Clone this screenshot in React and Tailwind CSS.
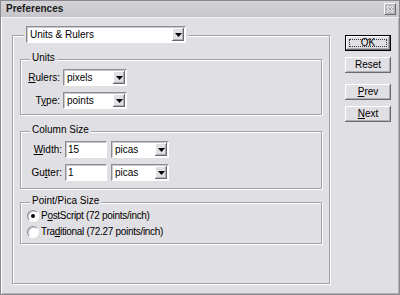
import React from 'react';

const etched = "border border-[#a4a3a8] shadow-[inset_1px_1px_0_#ffffff,1px_1px_0_#ffffff]";
const sunken = "bg-white border border-t-[#8e8d92] border-l-[#8e8d92] border-b-white border-r-white shadow-[inset_1px_1px_0_#c8c7cc]";
const raised = "bg-[#e0dfe3] shadow-[inset_-1px_-1px_0_#6a696e,inset_1px_1px_0_#ffffff,inset_-2px_-2px_0_#b0afb4]";

function Arrow() {
  return (
    <div className={`w-[12px] h-[13px] flex items-center justify-center ${raised}`}>
      <svg width="7" height="4" viewBox="0 0 7 4">
        <path d="M0 0h7L3.5 4z" fill="#000" />
      </svg>
    </div>
  );
}

function Select({ value, width }) {
  return (
    <div className={`${sunken} h-[17px] flex items-center justify-between pl-[3px] pr-[1px]`} style={{ width }}>
      <span className="leading-none">{value}</span>
      <Arrow />
    </div>
  );
}

function Group({ title, className, children }) {
  return (
    <div className={`relative ${etched} ${className}`}>
      <span className="absolute left-[9px] -top-[7px] px-[2px] bg-[#e0dfe3] leading-none">{title}</span>
      {children}
    </div>
  );
}

function Button({ children, def }) {
  if (def) {
    return (
      <div className="w-[46px] h-[16px] border border-black">
        <div className={`w-full h-full ${raised} p-[3px]`}>
          <div className="w-full h-full border border-dotted border-[#333] flex items-center justify-center leading-none">
            {children}
          </div>
        </div>
      </div>
    );
  }
  return (
    <div className={`w-[46px] h-[16px] ${raised} flex items-center justify-center leading-none`}>
      {children}
    </div>
  );
}

function Radio({ checked, children }) {
  return (
    <div className="flex items-center h-[16px] pl-[6px]">
      <div className="w-[12px] h-[12px] rounded-full border border-t-[#8e8d92] border-l-[#8e8d92] border-b-white border-r-white bg-white flex items-center justify-center shadow-[inset_1px_1px_0_#c8c7cc]">
        {checked && <div className="w-[4px] h-[4px] rounded-full bg-black" />}
      </div>
      <span className="ml-[2px] leading-none tracking-[-0.3px]">{children}</span>
    </div>
  );
}

export default function App() {
  return (
    <div className="w-[400px] h-[295px] flex flex-col bg-[#e0dfe3] border border-[#8a898e] shadow-[inset_1px_0_0_#ffffff,inset_-1px_-1px_0_#b4b3b8] text-[10px] text-black font-['Liberation_Sans',Arial,sans-serif] overflow-hidden">
      {/* title bar */}
      <div className="h-[17px] flex items-center justify-between pl-[5px] pr-[3px] bg-gradient-to-b from-[#d4d4d8] to-[#c6c6ca] border-b border-[#f2f2f4]">
        <span className="font-bold text-[10px] text-[#1a1a1a] leading-none">Preferences</span>
        <div className="w-[12px] h-[12px] bg-[#b8b8bc] border border-t-white border-l-white border-b-[#6a6a6e] border-r-[#6a6a6e] flex items-center justify-center">
          <svg width="8" height="8" viewBox="0 0 8 8">
            <path d="M1 1l6 6M7 1L1 7" stroke="#ffffff" strokeWidth="2" />
            <path d="M1.5 1.5l5 5M6.5 1.5l-5 5" stroke="#555" strokeWidth="0.6" />
          </svg>
        </div>
      </div>

      <div className="flex flex-1 pl-[11px] pt-[17px]">
        {/* main panel */}
        <div className={`relative w-[318px] h-[249px] ${etched} flex flex-col px-[7px] pt-[23px]`}>
          <div className="absolute left-[11px] -top-[10px] px-[2px] bg-[#e0dfe3]">
            <Select value="Units & Rulers" width={160} />
          </div>

          <Group title="Units" className="h-[56px] pt-[9px] flex flex-col gap-[6px]">
            <div className="flex items-center">
              <span className="w-[39px] text-right"><u>R</u>ulers:</span>
              <div className="ml-[3px]"><Select value="pixels" width={64} /></div>
            </div>
            <div className="flex items-center">
              <span className="w-[39px] text-right">T<u>y</u>pe:</span>
              <div className="ml-[3px]"><Select value="points" width={64} /></div>
            </div>
          </Group>

          <Group title="Column Size" className="mt-[16px] h-[58px] pt-[9px] flex flex-col gap-[6px]">
            <div className="flex items-center">
              <span className="w-[41px] text-right"><u>W</u>idth:</span>
              <div className={`ml-[3px] w-[42px] h-[17px] ${sunken} pl-[2px] flex items-center leading-none`}>15</div>
              <div className="ml-[4px]"><Select value="picas" width={58} /></div>
            </div>
            <div className="flex items-center">
              <span className="w-[41px] text-right">Gu<u>t</u>ter:</span>
              <div className={`ml-[3px] w-[42px] h-[17px] ${sunken} pl-[2px] flex items-center leading-none`}>1</div>
              <div className="ml-[4px]"><Select value="picas" width={58} /></div>
            </div>
          </Group>

          <Group title="Point/Pica Size" className="mt-[13px] h-[42px] pt-[5px] flex flex-col">
            <Radio checked>P<u>o</u>stScript (72 points/inch)</Radio>
            <Radio>Tra<u>d</u>itional (72.27 points/inch)</Radio>
          </Group>
        </div>

        {/* buttons */}
        <div className="ml-[15px] flex flex-col">
          <Button def>OK</Button>
          <div className="mt-[6px]"><Button>Reset</Button></div>
          <div className="mt-[11px]"><Button><span><u>P</u>rev</span></Button></div>
          <div className="mt-[6px]"><Button><span><u>N</u>ext</span></Button></div>
        </div>
      </div>
    </div>
  );
}
